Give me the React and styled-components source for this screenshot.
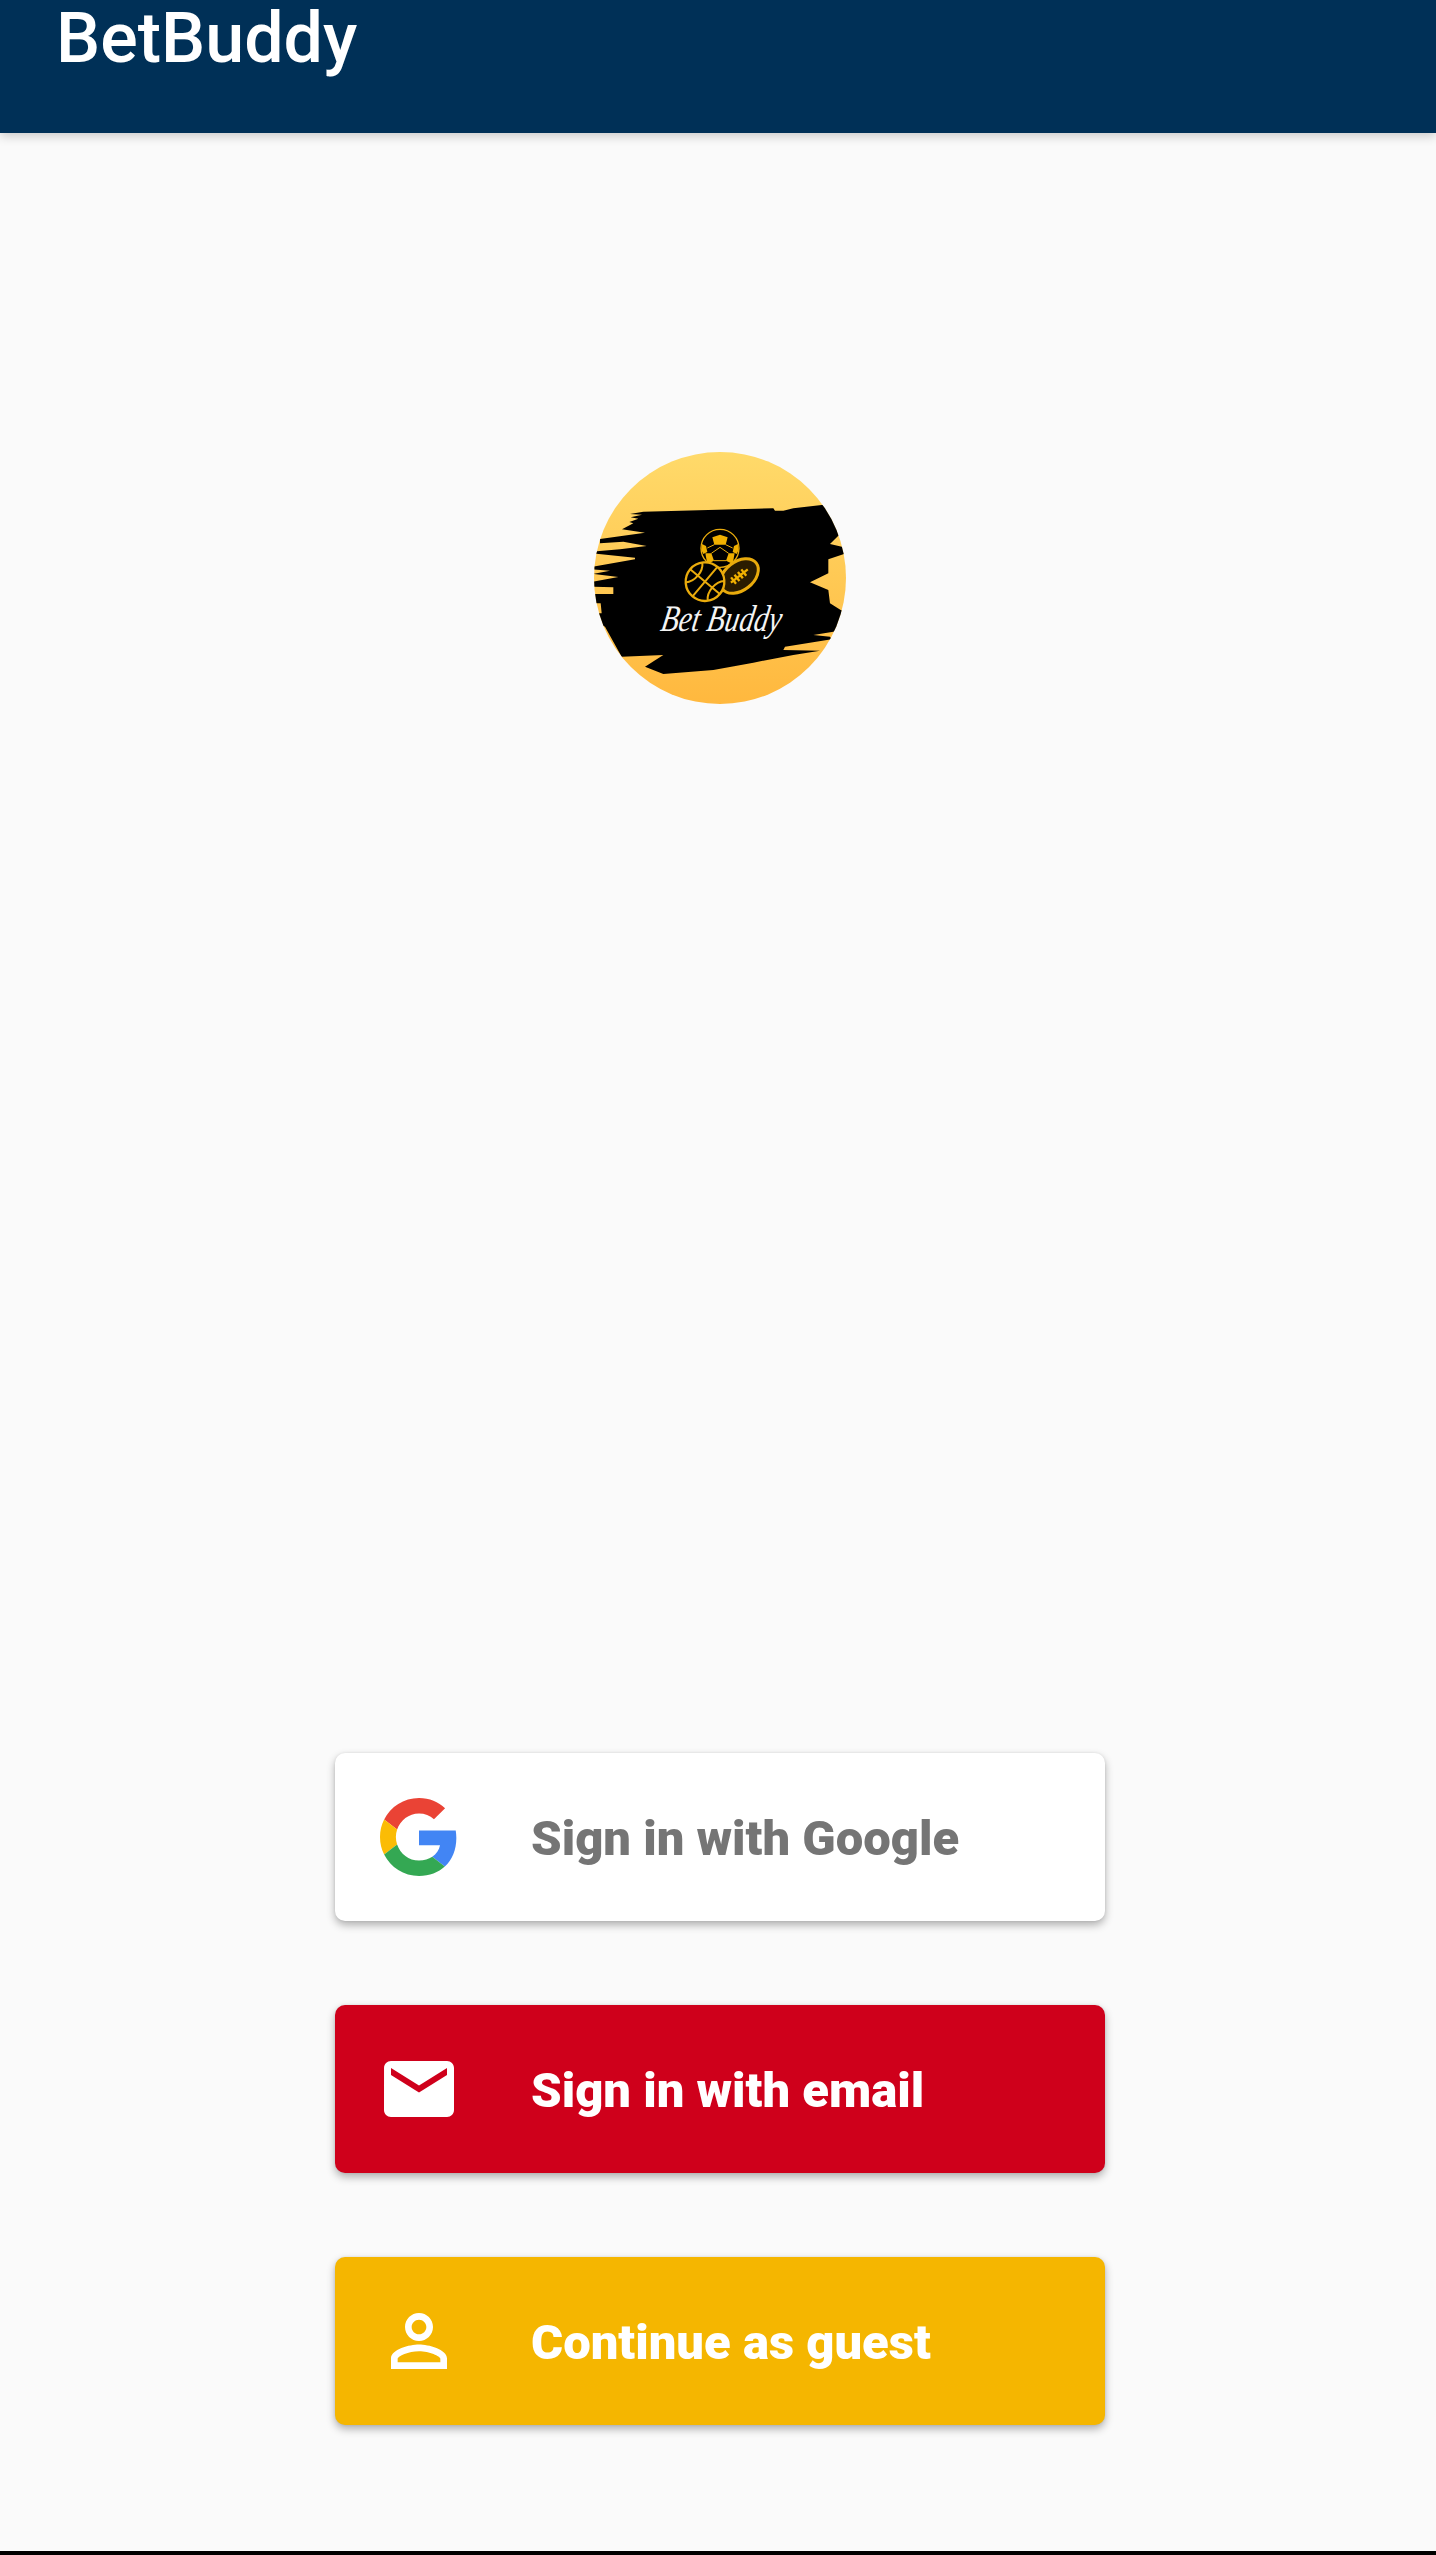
import * as React from "react";
import styled, { createGlobalStyle } from "styled-components";

const GlobalStyle = createGlobalStyle`
    html, body {
        margin: 0;
        padding: 0;
        background: #fafafa;
    }
`;

const brush =
    "M125 650L250 645L195 680L250 702L400 690L520 668L640 645L720 632L610 630L615 620L755 598L750 590L700 585L760 575L800 560L800 515L782 510L750 490L745 450L690 427L745 400L745 358L792 342L792 322L750 312L778 284L800 280L800 195L725 195L640 205L610 212L585 212L580 205L190 215L150 222L186 224L152 232L175 236L148 246L160 250L126 268L195 278L60 297L60 310L130 305L200 318L120 328L40 335L40 340L165 353L165 358L40 380L40 388L90 392L40 402L115 411L40 425L40 440L100 442L100 462L40 462L40 490L62 490L65 520L40 520L40 540L75 560Z";

function Logo() {
    return (
        <LogoMark viewBox="42 36 756 756" role="img" aria-label="Bet Buddy logo">
            <defs>
                <linearGradient id="logoSky" x1="0" y1="0" x2="0" y2="1">
                    <stop offset="0" stopColor="#ffda6a" />
                    <stop offset="1" stopColor="#ffb83e" />
                </linearGradient>
            </defs>
            <rect x="42" y="36" width="756" height="756" fill="url(#logoSky)" />
            <path d={brush} fill="#000" />

            {/* soccer ball */}
            <circle cx="420" cy="325" r="57" fill="#000" stroke="#e9ab0c" strokeWidth="4" />
            <path d="M397 292L420 284L443 292L437 314L403 314Z" fill="#f0b000" />
            <path d="M366 312L378 318L382 336L370 342L364 330Z" fill="#f0b000" />
            <path d="M474 312L462 318L458 336L470 342L476 330Z" fill="#f0b000" />
            <path d="M376 340L394 340L402 362L382 372Z" fill="#f0b000" />
            <path d="M464 340L446 340L438 362L458 372Z" fill="#f0b000" />
            <path d="M403 314L382 324M437 314L458 324M394 340L420 322L446 340M402 362L438 362" stroke="#e9ab0c" strokeWidth="3" fill="none" />

            {/* football */}
            <g transform="rotate(-38 478 408)">
                <ellipse cx="478" cy="408" rx="64" ry="43" fill="#2a1c00" stroke="#e9ab0c" strokeWidth="9" />
                <path d="M446 408H510M456 396V420M469 396V420M482 396V420M495 396V420" stroke="#f0b000" strokeWidth="7" fill="none" />
            </g>

            {/* basketball */}
            <g transform="rotate(40 375 425)">
                <circle cx="375" cy="425" r="58" fill="#000" stroke="#e9ab0c" strokeWidth="7" />
                <path
                    d="M375 367V483M317 425H433M332 386C352 405 352 445 332 464M418 386C398 405 398 445 418 464"
                    stroke="#e9ab0c"
                    strokeWidth="6"
                    fill="none"
                />
            </g>

            <LogoText x="245" y="572" textLength="362" lengthAdjust="spacingAndGlyphs">
                Bet Buddy
            </LogoText>
        </LogoMark>
    );
}

function GoogleIcon() {
    return (
        <GoogleMark viewBox="0 0 48 48">
            <path fill="#EA4335" d="M24 9.5c3.54 0 6.71 1.22 9.21 3.6l6.85-6.85C35.9 2.38 30.47 0 24 0 14.62 0 6.51 5.38 2.56 13.22l7.98 6.19C12.43 13.72 17.74 9.5 24 9.5z" />
            <path fill="#4285F4" d="M46.98 24.55c0-1.57-.15-3.09-.38-4.55H24v9.02h12.94c-.58 2.96-2.26 5.48-4.78 7.18l7.73 6c4.51-4.18 7.09-10.36 7.09-17.65z" />
            <path fill="#FBBC05" d="M10.53 28.59c-.48-1.45-.76-2.99-.76-4.59s.27-3.14.76-4.59l-7.98-6.19C.92 16.46 0 20.12 0 24c0 3.88.92 7.54 2.56 10.78l7.97-6.19z" />
            <path fill="#34A853" d="M24 48c6.48 0 11.93-2.13 15.89-5.81l-7.73-6c-2.15 1.45-4.92 2.3-8.16 2.3-6.26 0-11.57-4.22-13.47-9.91l-7.98 6.19C6.51 42.62 14.62 48 24 48z" />
        </GoogleMark>
    );
}

function MailIcon() {
    return (
        <MaterialMark viewBox="0 0 24 24">
            <path d="M20 4H4c-1.1 0-1.99.9-1.99 2L2 18c0 1.1.9 2 2 2h16c1.1 0 2-.9 2-2V6c0-1.1-.9-2-2-2zm0 4l-8 5-8-5V6l8 5 8-5v2z" />
        </MaterialMark>
    );
}

function PersonIcon() {
    return (
        <MaterialMark viewBox="0 0 24 24">
            <path d="M12 5.9c1.16 0 2.1.94 2.1 2.1s-.94 2.1-2.1 2.1S9.9 9.16 9.9 8s.94-2.1 2.1-2.1m0 9c2.97 0 6.1 1.46 6.1 2.1v1.1H5.9V17c0-.64 3.13-2.1 6.1-2.1M12 4C9.79 4 8 5.79 8 8s1.79 4 4 4 4-1.79 4-4-1.79-4-4-4zm0 9c-2.67 0-8 1.34-8 4v3h16v-3c0-2.66-5.33-4-8-4z" />
        </MaterialMark>
    );
}

function App() {
    return (
        <Page>
            <GlobalStyle />
            <TopBar>
                <Title>BetBuddy</Title>
            </TopBar>
            <Body>
                <Logo />
                <Actions>
                    <ActionButton $bg="#ffffff" $color="#757575">
                        <IconSlot>
                            <GoogleIcon />
                        </IconSlot>
                        <ActionLabel>Sign in with Google</ActionLabel>
                    </ActionButton>
                    <ActionButton $bg="#cf001b" $color="#ffffff">
                        <IconSlot>
                            <MailIcon />
                        </IconSlot>
                        <ActionLabel>Sign in with email</ActionLabel>
                    </ActionButton>
                    <ActionButton $bg="#f5b600" $color="#ffffff">
                        <IconSlot>
                            <PersonIcon />
                        </IconSlot>
                        <ActionLabel>Continue as guest</ActionLabel>
                    </ActionButton>
                </Actions>
            </Body>
        </Page>
    );
}

const Page = styled.div`
    width: 1436px;
    height: 2555px;
    box-sizing: border-box;
    display: flex;
    flex-direction: column;
    background: #fafafa;
    border-bottom: 4px solid #000;
    overflow: hidden;
`;

const TopBar = styled.header`
    height: 133px;
    flex-shrink: 0;
    padding-left: 56px;
    background: #003057;
    box-shadow: 0 3px 10px rgba(0, 0, 0, 0.2);
    position: relative;
    z-index: 1;
`;

const Title = styled.h1`
    margin: 0;
    color: #fff;
    font-family: Roboto, sans-serif;
    font-size: 70px;
    font-weight: 500;
    line-height: 76px;
`;

const Body = styled.main`
    flex: 1;
    display: flex;
    flex-direction: column;
    align-items: center;
    padding: 319px 0 0 4px;
`;

const LogoMark = styled.svg`
    width: 252px;
    height: 252px;
    border-radius: 50%;
    display: block;
    flex-shrink: 0;
`;

const LogoText = styled.text`
    fill: #f4f4f4;
    font-family: "Liberation Serif", serif;
    font-style: italic;
    font-size: 112px;
    transform-box: fill-box;
    transform-origin: center;
    transform: skewX(-10deg);
`;

const Actions = styled.div`
    margin-top: 1049px;
    display: flex;
    flex-direction: column;
    gap: 84px;
`;

const ActionButton = styled.button`
    width: 770px;
    height: 168px;
    padding: 0 0 0 42px;
    border: none;
    border-radius: 10px;
    display: flex;
    align-items: center;
    gap: 70px;
    background: ${(p) => p.$bg};
    color: ${(p) => p.$color};
    box-shadow: 0 4px 8px rgba(0, 0, 0, 0.3), 0 0 3px rgba(0, 0, 0, 0.08);
`;

const ActionLabel = styled.span`
    font-family: Roboto, sans-serif;
    font-size: 49px;
    font-weight: 900;
    position: relative;
    top: 1px;
`;

const IconSlot = styled.span`
    width: 84px;
    height: 84px;
    display: flex;
    align-items: center;
    justify-content: center;
`;

const GoogleMark = styled.svg`
    width: 78px;
    height: 78px;
    display: block;
`;

const MaterialMark = styled.svg`
    width: 84px;
    height: 84px;
    display: block;
    fill: #fff;
`;

export default App;
